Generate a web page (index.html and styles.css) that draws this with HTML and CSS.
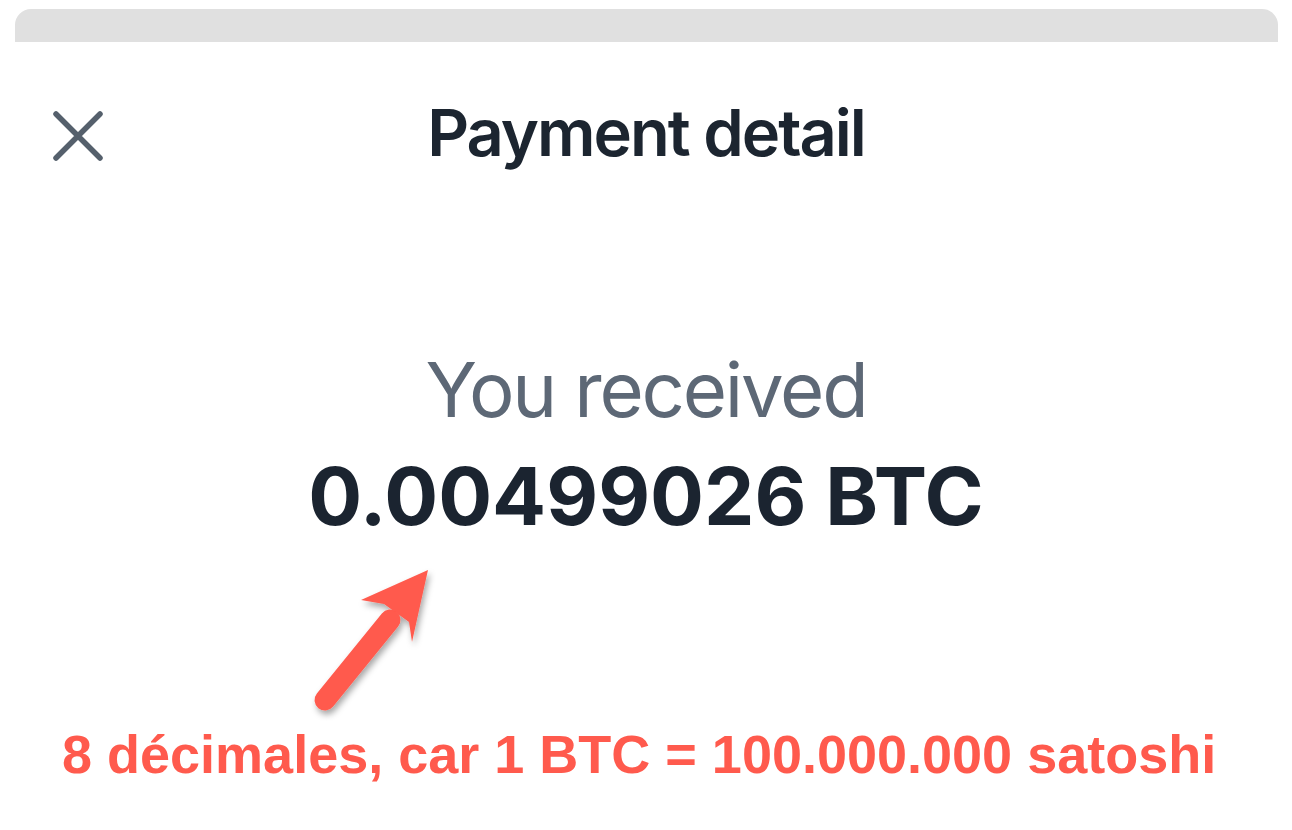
FILE: index.html
```html
<!DOCTYPE html>
<html>
<head>
<meta charset="utf-8">
<link rel="stylesheet" href="styles.css">
</head>
<body>
<div class="page">
  <div class="sheet-top"></div>
  <header class="header">
    <button class="close" aria-label="Close">
      <svg width="50" height="50" viewBox="0 0 50 50"><path d="M3 3 L47 47 M47 3 L3 47" stroke="#55606c" stroke-width="5.5" stroke-linecap="round"/></svg>
    </button>
    <h1 class="title">Payment detail</h1>
  </header>
  <section class="summary">
    <div class="label">You received</div>
    <div class="amount">0.00499026 BTC</div>
  </section>
  <div class="note">8 décimales, car 1 BTC = 100.000.000 satoshi</div>
  <svg class="arrow" width="200" height="200" viewBox="0 0 200 200">
    <defs>
      <filter id="sh" x="-30%" y="-30%" width="160%" height="160%">
        <feDropShadow dx="2" dy="4" stdDeviation="3" flood-color="#000" flood-opacity="0.35"/>
      </filter>
    </defs>
    <g filter="url(#sh)">
      <path d="M25 150 L90 70" stroke="#ff5a4d" stroke-width="21" stroke-linecap="round"/>
      <path d="M128 20 L61 50 L84 54 L109 72 L112 92 Z" fill="#ff5a4d"/>
    </g>
  </svg>
</div>
</body>
</html>
```
FILE: styles.css
```css
html, body {
  margin: 0;
  padding: 0;
  background: #ffffff;
}
.page {
  position: relative;
  width: 1292px;
  height: 830px;
  overflow: hidden;
  font-family: Inter, "Noto Sans", sans-serif;
}
.sheet-top {
  margin: 9px 14px 0 15px;
  height: 33px;
  background: #e0e0e0;
  border-radius: 16px 16px 0 0;
}
.header {
  position: relative;
  height: 112px;
  display: flex;
  align-items: center;
  justify-content: center;
  margin-top: 34px;
}
.close {
  position: absolute;
  left: 53px;
  top: 35px;
  width: 50px;
  height: 50px;
  padding: 0;
  border: 0;
  background: none;
  display: flex;
}
.title {
  margin: 0;
  font-size: 65px;
  font-weight: 600;
  color: #1c2530;
  letter-spacing: -2px;
}
.summary {
  margin-top: 156px;
  display: flex;
  flex-direction: column;
  align-items: center;
}
.label {
  font-size: 76px;
  font-weight: 400;
  color: #5d6876;
  line-height: 90px;
  letter-spacing: -2.2px;
}
.amount {
  margin-top: 17px;
  font-size: 80px;
  font-weight: 700;
  color: #1b2430;
  line-height: 90px;
}
.note {
  position: absolute;
  left: 62px;
  top: 723px;
  font-family: "Liberation Sans", Arial, sans-serif;
  font-weight: 700;
  font-size: 54px;
  color: #ff5a4d;
  white-space: nowrap;
}
.arrow {
  position: absolute;
  left: 300px;
  top: 550px;
}
```
